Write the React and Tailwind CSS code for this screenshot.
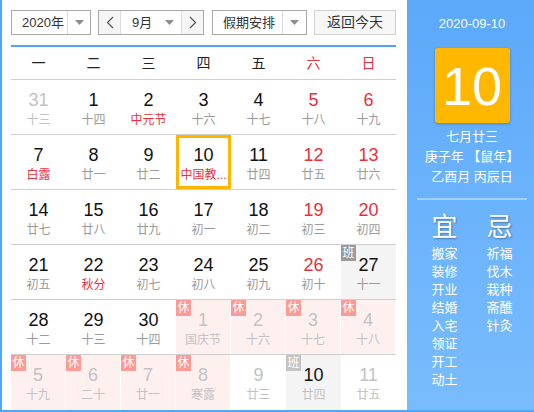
import React from "react";

const F = "font-['Liberation_Sans','Noto_Sans_CJK_SC',sans-serif]";

const rows = [
  [
    { n: 31, l: "十三", other: true },
    { n: 1, l: "十四" },
    { n: 2, l: "中元节", fest: true },
    { n: 3, l: "十六" },
    { n: 4, l: "十七" },
    { n: 5, l: "十八", we: true },
    { n: 6, l: "十九", we: true },
  ],
  [
    { n: 7, l: "白露", fest: true },
    { n: 8, l: "廿一" },
    { n: 9, l: "廿二" },
    { n: 10, l: "中国教...", fest: true, sel: true },
    { n: 11, l: "廿四" },
    { n: 12, l: "廿五", we: true },
    { n: 13, l: "廿六", we: true },
  ],
  [
    { n: 14, l: "廿七" },
    { n: 15, l: "廿八" },
    { n: 16, l: "廿九" },
    { n: 17, l: "初一" },
    { n: 18, l: "初二" },
    { n: 19, l: "初三", we: true },
    { n: 20, l: "初四", we: true },
  ],
  [
    { n: 21, l: "初五" },
    { n: 22, l: "秋分", fest: true },
    { n: 23, l: "初七" },
    { n: 24, l: "初八" },
    { n: 25, l: "初九" },
    { n: 26, l: "初十", we: true },
    { n: 27, l: "十一", work: true },
  ],
  [
    { n: 28, l: "十二" },
    { n: 29, l: "十三" },
    { n: 30, l: "十四" },
    { n: 1, l: "国庆节", other: true, rest: true },
    { n: 2, l: "十六", other: true, rest: true },
    { n: 3, l: "十七", other: true, rest: true },
    { n: 4, l: "十八", other: true, rest: true },
  ],
  [
    { n: 5, l: "十九", other: true, rest: true },
    { n: 6, l: "二十", other: true, rest: true },
    { n: 7, l: "廿一", other: true, rest: true },
    { n: 8, l: "寒露", other: true, rest: true },
    { n: 9, l: "廿三", other: true },
    { n: 10, l: "廿四", other: true, work: true, dark: true },
    { n: 11, l: "廿五", other: true },
  ],
];

function Tri() {
  return (
    <svg width="9" height="5" viewBox="0 0 9 5">
      <polygon points="0,0 9,0 4.5,5" fill="#8c8c8c" />
    </svg>
  );
}

function Chev({ dir }) {
  return (
    <svg width="8" height="13" viewBox="0 0 8 13">
      <polyline
        points={dir === "l" ? "7,1 1.5,6.5 7,12" : "1,1 6.5,6.5 1,12"}
        fill="none"
        stroke="#555"
        strokeWidth="1.2"
      />
    </svg>
  );
}

function Cell({ d, last }) {
  let numColor = "text-[#111]";
  if (d.other) numColor = d.dark ? "text-[#111]" : "text-[#c2c2c2]";
  else if (d.we) numColor = "text-[#e8303a]";
  let lunColor = "text-[#9a9a9a]";
  if (d.other) lunColor = "text-[#c2c2c2]";
  else if (d.fest) lunColor = "text-[#e8303a]";
  let bg = "";
  if (d.rest) bg = "bg-[#fff0f0] border-r border-white";
  if (d.work) bg = "bg-[#f4f4f4]";
  return (
    <div className={`relative h-full ${bg}`}>
      {d.rest && (
        <div className="absolute left-0 top-0 w-[15px] h-[16px] bg-[#fc9a95] text-white text-[12px] leading-[16px] text-center">
          休
        </div>
      )}
      {d.work && (
        <div
          className={`absolute left-0 top-0 w-[15px] h-[16px] ${
            d.dark ? "bg-[#c4c4c4]" : "bg-[#9a9a9a]"
          } text-white text-[12px] leading-[16px] text-center`}
        >
          班
        </div>
      )}
      <div
        className={`h-full flex flex-col items-center ${
          d.sel ? "border-[3px] border-[#ffb600] pt-[7px]" : "pt-[10px]"
        }`}
      >
        <div className={`text-[18px] leading-[20px] ${numColor}`}>{d.n}</div>
        <div
          className={`mt-[1px] text-[12px] leading-[18px] whitespace-nowrap ${lunColor}`}
        >
          {d.l}
        </div>
      </div>
    </div>
  );
}

export default function App() {
  const wk = ["一", "二", "三", "四", "五", "六", "日"];
  return (
    <div className={`${F} w-[534px] h-[412px] flex border-l-2 border-b-2 border-[#52a6f7] overflow-hidden bg-white`}>
      <div className="w-[405px] shrink-0 pl-[9px] pr-[11px] pt-[10px]">
        {/* toolbar */}
        <div className="flex h-[25px] text-[13px] text-[#333]">
          <div className="w-[80px] flex border border-[#a8a8a8] bg-white">
            <div className="w-[55px] pl-[10px] leading-[23px]">2020年</div>
            <div className="flex-1 border-l border-[#dcdcdc] flex items-center justify-center">
              <Tri />
            </div>
          </div>
          <div className="ml-[7px] w-[106px] flex border border-[#a8a8a8]">
            <div className="w-[22px] bg-[#f6f6f6] flex items-center justify-center border-r border-[#dcdcdc]">
              <Chev dir="l" />
            </div>
            <div className="w-[61px] flex items-center bg-white pl-[11px] pr-[7px] justify-between border-r border-[#dcdcdc]">
              <span className="leading-[23px]">9月</span>
              <Tri />
            </div>
            <div className="flex-1 bg-[#f6f6f6] flex items-center justify-center">
              <Chev dir="r" />
            </div>
          </div>
          <div className="ml-[8px] w-[95px] flex border border-[#a8a8a8] bg-white">
            <div className="w-[69px] pl-[10px] leading-[23px]">假期安排</div>
            <div className="flex-1 border-l border-[#dcdcdc] flex items-center justify-center">
              <Tri />
            </div>
          </div>
          <div className="ml-[7px] w-[82px] border border-[#d2d2d2] bg-[#f7f7f7] text-center leading-[23px] text-[14px]">
            返回今天
          </div>
        </div>
        {/* blue line */}
        <div className="mt-[10px] h-[2px] bg-[#4fa6f7]" />
        {/* weekday header */}
        <div className="grid grid-cols-7 h-[33px] border-b border-[#cfcfcf] text-[14px] leading-[32px] text-center">
          {wk.map((w, i) => (
            <div key={w} className={i >= 5 ? "text-[#e8303a]" : "text-[#222]"}>
              {w}
            </div>
          ))}
        </div>
        {rows.map((r, ri) => (
          <div
            key={ri}
            className={`grid grid-cols-7 h-[55px] ${
              ri < 5 ? "border-b border-[#cfcfcf]" : ""
            }`}
          >
            {r.map((d, ci) => (
              <Cell key={ci} d={d} />
            ))}
          </div>
        ))}
      </div>
      {/* right panel */}
      <div className="flex-1 bg-linear-to-b from-[#5ca9fa] to-[#79bcfd] pl-[3px] flex flex-col items-center text-white">
        <div className="pt-[16px] text-[13px] leading-[16px]">2020-09-10</div>
        <div className="mt-[16px] w-[75px] h-[75px] rounded-[3px] bg-[#ffb700] shadow-[0_1px_3px_rgba(0,0,0,0.25)] flex items-center justify-center text-[54px] leading-none">
          10
        </div>
        <div className="mt-[4px] text-[13px] leading-[20px] text-center">
          <div>七月廿三</div>
          <div>庚子年 【鼠年】</div>
          <div>乙酉月 丙辰日</div>
        </div>
        <div className="mt-[11px] w-[110px] h-[2px] bg-[#a3cffc]" />
        <div className="mt-[12px] flex">
          <div className="w-[55px] flex flex-col items-center">
            <div className="text-[26px] leading-[30px] [text-shadow:1px_1px_2px_rgba(0,0,0,0.35)]">宜</div>
            <div className="mt-[3px] text-[13px] leading-[18px] flex flex-col items-center">
              {["搬家", "装修", "开业", "结婚", "入宅", "领证", "开工", "动土"].map((t) => (
                <div key={t}>{t}</div>
              ))}
            </div>
          </div>
          <div className="w-[55px] flex flex-col items-center">
            <div className="text-[26px] leading-[30px] [text-shadow:1px_1px_2px_rgba(0,0,0,0.35)]">忌</div>
            <div className="mt-[3px] text-[13px] leading-[18px] flex flex-col items-center">
              {["祈福", "伐木", "栽种", "斋醮", "针灸"].map((t) => (
                <div key={t}>{t}</div>
              ))}
            </div>
          </div>
        </div>
      </div>
    </div>
  );
}
